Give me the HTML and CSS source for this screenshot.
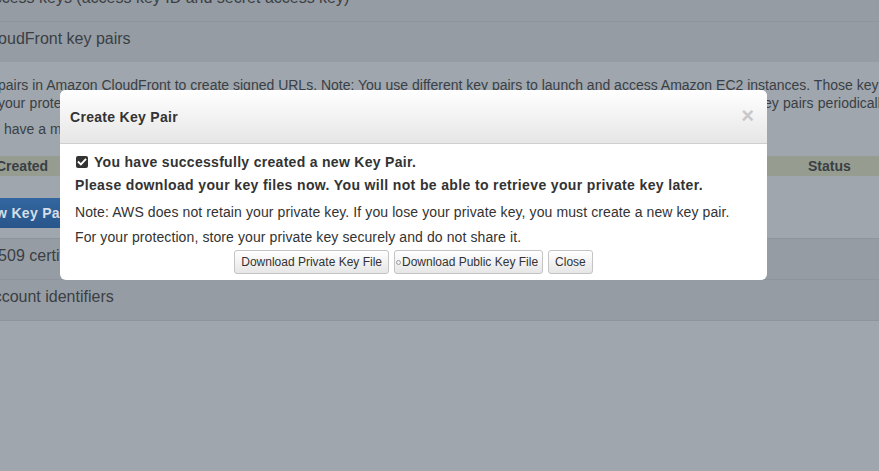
FILE: index.html
```html
<!DOCTYPE html>
<html>
<head>
<meta charset="utf-8">
<title>Create Key Pair</title>
<link rel="stylesheet" href="styles.css">
</head>
<body>
<div class="page">
  <div class="section">Access keys (access key ID and secret access key)</div>
  <div class="section">CloudFront key pairs</div>
  <div class="content">
    <div class="line">pairs in Amazon CloudFront to create signed URLs. Note: You use different key pairs to launch and access Amazon EC2 instances. Those key pairs are not valid here.</div>
    <div class="line wide">your protection, AWS recommends that you rotate (replace) your root account access keys and your Amazon CloudFront key pairs periodically.</div>
    <div class="line para">have a maximum of two CloudFront key pairs (active or inactive) at a time.</div>
    <div class="thead">
      <span class="th-created">Created</span>
      <span class="th-status">Status</span>
    </div>
    <div class="btn-row"><span class="btn-blue">Create New Key Pair</span></div>
  </div>
  <div class="section">X.509 certificates</div>
  <div class="section section-last">Account identifiers</div>
</div>

<div class="modal">
  <div class="modal-header">
    <span class="modal-title">Create Key Pair</span>
    <span class="modal-close">×</span>
  </div>
  <div class="modal-body">
    <p class="msg-strong first"><svg class="check" width="12" height="12" viewBox="0 0 12 12"><rect x="0" y="0" width="12" height="12" rx="2" fill="#333"/><path d="M2.6 6.2 L4.9 8.5 L9.4 3.6" fill="none" stroke="#fff" stroke-width="1.9" stroke-linecap="square"/></svg>You have successfully created a new Key Pair.</p>
    <p class="msg-strong second">Please download your key files now. You will not be able to retrieve your private key later.</p>
    <p class="msg note">Note: AWS does not retain your private key. If you lose your private key, you must create a new key pair.</p>
    <p class="msg prot">For your protection, store your private key securely and do not share it.</p>
    <div class="actions">
      <span class="btn">Download Private Key File</span>
      <span class="btn btn-icon"><span class="ring"></span>Download Public Key File</span>
      <span class="btn">Close</span>
    </div>
  </div>
</div>
</body>
</html>
```

FILE: styles.css
```css
html, body {
  margin: 0;
  padding: 0;
}
body {
  width: 879px;
  height: 471px;
  overflow: hidden;
  background: #9fa6ad;
  font-family: "Liberation Sans", Arial, sans-serif;
  color: #3a3f45;
  position: relative;
}
.page {
  margin-top: -20px;
  margin-left: -17px;
  width: 1100px;
}
.section {
  height: 40px;
  line-height: 34px;
  border-top: 1px solid #8e949b;
  background: #969ca3;
  font-size: 16px;
  white-space: nowrap;
}
.section-last {
  border-bottom: 1px solid #8e949b;
}
.content {
  padding: 14px 0 10px 0;
  background: #9fa6ad;
}
.line {
  font-size: 14px;
  line-height: 18px;
  white-space: nowrap;
  padding-left: 15px;
}
.wide {
  word-spacing: 0.5px;
}
.para {
  margin-top: 8px;
  padding-left: 21px;
}
.thead {
  margin-top: 18px;
  height: 20px;
  line-height: 20px;
  background: #969d90;
  font-size: 14px;
  font-weight: bold;
  display: flex;
}
.th-created {
  padding-left: 13px;
  width: 812px;
}
.btn-row {
  margin-top: 22px;
  display: flex;
}
.btn-blue {
  margin-left: -67px;
  height: 30px;
  line-height: 30px;
  padding: 0 12px;
  border-radius: 3px;
  background: linear-gradient(#3366a0, #28558a);
  color: #d5dde6;
  font-size: 14px;
  font-weight: bold;
  letter-spacing: 0.3px;
  white-space: nowrap;
}

.modal {
  position: absolute;
  left: 60px;
  top: 90px;
  width: 707px;
  height: 190px;
  background: #fff;
  border-radius: 6px;
  overflow: hidden;
  color: #333;
}
.modal-header {
  height: 54px;
  box-sizing: border-box;
  border-bottom: 1px solid #cfcfcf;
  background: linear-gradient(#ffffff, #e6e6e6);
  display: flex;
  align-items: center;
  justify-content: space-between;
  padding: 0 13px 0 10px;
}
.modal-title {
  font-size: 14px;
  font-weight: bold;
  letter-spacing: 0.3px;
  color: #333;
}
.modal-close {
  font-size: 22px;
  font-weight: bold;
  color: #c8c8c8;
  line-height: 20px;
  margin-top: -2px;
}
.modal-body {
  padding: 8px 15px 0 15px;
}
.modal-body p {
  margin: 0;
  font-size: 14px;
  line-height: 20px;
  white-space: nowrap;
}
.msg-strong {
  font-weight: bold;
  letter-spacing: 0.36px;
}
.second {
  margin-top: 3px !important;
}
.first {
  display: flex;
  align-items: center;
  letter-spacing: 0.3px;
}
.check {
  margin-left: 1px;
  margin-right: 6px;
}
.msg {
  letter-spacing: 0.1px;
}
.note {
  margin-top: 7px !important;
}
.prot {
  margin-top: 5px !important;
}
.actions {
  margin-top: 3px;
  display: flex;
  justify-content: center;
  gap: 5px;
}
.btn {
  height: 24px;
  box-sizing: border-box;
  border: 1px solid #c4c4c4;
  border-radius: 3px;
  background: linear-gradient(#ffffff, #e6e6e6);
  font-size: 12px;
  line-height: 22px;
  padding: 0 6px;
  color: #333;
  white-space: nowrap;
  display: inline-flex;
  align-items: center;
}
.btn-icon {
  padding-left: 1px;
  padding-right: 4px;
}
.ring {
  width: 3px;
  height: 3px;
  border: 1px solid #9a9aa8;
  border-radius: 50%;
  margin-right: 1px;
}
```
